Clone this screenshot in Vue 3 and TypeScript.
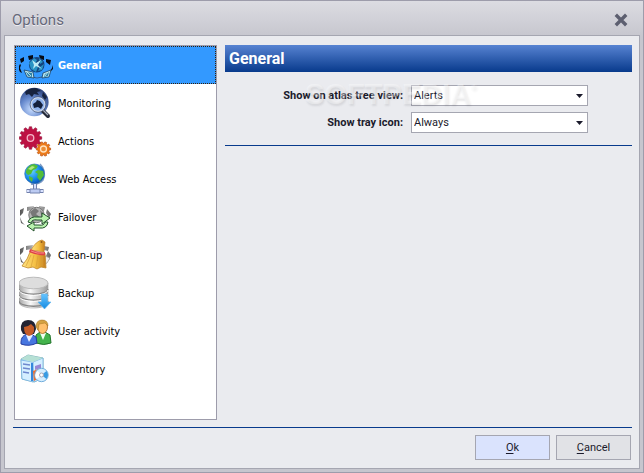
<script setup lang="ts">
import { ref } from 'vue'

const sections = [
  'General', 'Monitoring', 'Actions', 'Web Access', 'Failover',
  'Clean-up', 'Backup', 'User activity', 'Inventory',
] as const
type Section = (typeof sections)[number]

const current = ref<Section>('General')
const atlasView = ref('Alerts')
const trayIcon = ref('Always')

function gear(cx: number, cy: number, outer: number, inner: number, teeth: number): string {
  const points: string[] = []
  const step = (Math.PI * 2) / teeth
  for (let i = 0; i < teeth; i++) {
    for (const [offset, radius] of [[-0.3, inner], [-0.2, outer], [0.2, outer], [0.3, inner]]) {
      const a = (i + offset) * step
      points.push(`${(cx + radius * Math.cos(a)).toFixed(1)},${(cy + radius * Math.sin(a)).toFixed(1)}`)
    }
  }
  return points.join(' ')
}
const redGear = gear(11.5, 15, 11.3, 9.2, 12)
const orangeGear = gear(24.5, 26, 7.2, 5.8, 10)
</script>

<template>
  <div class="window">
    <header class="titlebar">
      <h1>Options</h1>
      <button class="close" type="button" aria-label="Close">
        <svg width="14" height="14" viewBox="0 0 14 14"><path d="M3 3l8 8M11 3l-8 8" stroke="#5d5f70" stroke-width="3.4" stroke-linecap="square" /></svg>
      </button>
    </header>
    <main class="client">
      <div class="panes">
        <nav class="list" aria-label="Sections">
          <button
            v-for="s in sections" :key="s" type="button" class="item"
            :class="{ selected: s === current }" @click="current = s"
          >
            <svg class="icon" viewBox="0 0 36 36" aria-hidden="true">
              <defs v-if="s === 'General'">
                <radialGradient id="ball" cx=".4" cy=".75" r=".8"><stop offset="0" stop-color="#c6dcff" /><stop offset=".5" stop-color="#6487cc" /><stop offset="1" stop-color="#293d75" /></radialGradient>
                <radialGradient id="sea" cx=".35" cy=".35" r=".75"><stop offset="0" stop-color="#69d5ff" /><stop offset=".55" stop-color="#178bea" /><stop offset="1" stop-color="#0647ae" /></radialGradient>
                <linearGradient id="metal"><stop offset="0" stop-color="#a6a6a6" /><stop offset=".4" stop-color="#f8f8f8" /><stop offset="1" stop-color="#999" /></linearGradient>
                <linearGradient id="straw" x2="1"><stop offset="0" stop-color="#ffe484" /><stop offset=".55" stop-color="#f5c043" /><stop offset="1" stop-color="#c47c1b" /></linearGradient>
                <linearGradient id="down" x2="0" y2="1"><stop offset="0" stop-color="#66c4ff" /><stop offset="1" stop-color="#168be2" /></linearGradient>
                <linearGradient id="box"><stop offset="0" stop-color="#80bff0" /><stop offset=".4" stop-color="#eef9ff" /><stop offset="1" stop-color="#68afe9" /></linearGradient>
                <linearGradient id="ring"><stop offset="0" stop-color="#555" /><stop offset=".5" stop-color="#c4c4c4" /><stop offset="1" stop-color="#666" /></linearGradient>
              </defs>
              <g v-if="s === 'General'">
                <path d="M13 30Q18 32 23 30" fill="none" stroke="#315d92" />
                <path d="M1 12l4-2v4l-3 2zM9 9l5-1v4l-4 1zM20 8l5 1v4l-4-1zM27 12l5 1-1 5-4-3zM1 17l1 1-1 3 2 5-2-1-2-4zM34 18v4l-4 4 3-5z" fill="#070b14" />
                <circle cx="17.700" cy="17.700" r="7.800" fill="#14447f" />
                <path d="M10 16l5-5 3 2-2 4 3 3-2 5-5-3zM20 11l4 4-3 2zM21 20l4-3-2 6-4 1z" fill="#2993c4" />
                <path d="M13 13l4 3 5-3-3 5 4 4-6-3-3 3 1-4z" fill="#bdebf5" />
                <path d="M5 23l9 2 1 6-7-1zM24 26l8-3-2 7-7 1z" fill="#bce6ee" stroke="#163f63" stroke-width=".8" />
                <path d="M7 25l6 1v4l-4-1zM26 27l4-2-1 4-4 1z" fill="#2e83aa" />
                <path d="M8 25l4 4M29 25l-3 4" stroke="#d8f5f8" stroke-width=".8" />
              </g>
              <g v-else-if="s === 'Monitoring'">
                <circle cx="15.3" cy="17" r="14.3" fill="url(#ball)" />
                <path d="M6 7Q10 3 17 3l5 3-4 1 2 3-5-1-2 3-3-3-3 1zM24 7l4 5-2 3-3-4z" fill="#18233e" />
                <path d="M22 24l7 7" stroke="#262b39" stroke-width="4" stroke-linecap="round" />
                <path d="M23 24l6 6" stroke="#a5acbc" stroke-width="1.3" />
                <circle cx="19" cy="19.5" r="7" fill="#8db1eb" stroke="#cbd6e9" stroke-width="1.5" />
                <circle cx="19" cy="19.5" r="7.9" fill="none" stroke="#435373" stroke-width=".7" />
                <path d="M14 19l3-2 1-2 3 1 3 4-2 4-3-2-4 1z" fill="#14203c" />
              </g>
              <g v-else-if="s === 'Actions'">
                <polygon :points="redGear" fill="#bd1143" stroke="#930e38" stroke-width=".6" />
                <circle cx="11.5" cy="15" r="3.3" fill="#c92355" stroke="#f4b7c8" stroke-width="1.3" />
                <polygon :points="orangeGear" fill="#ee7b18" stroke="#b95013" stroke-width=".7" />
                <circle cx="24.5" cy="26" r="3" fill="#eb8d36" stroke="#ffe1bd" stroke-width="1.3" />
              </g>
              <g v-else-if="s === 'Web Access'">
                <path d="M21 3Q28 10 24 19Q20 24 12 23" fill="none" stroke="#7c9ac4" stroke-width="1.6" />
                <path d="M16 23v5M7.500 30h17" stroke="#7180ac" stroke-width="4" />
                <path d="M16 23v5M8 30h16" stroke="#d9e2ff" stroke-width="2" />
                <path d="M11 28h10v4H11z" fill="#bccbf2" stroke="#7382ae" />
                <circle cx="15.500" cy="12.800" r="9.800" fill="url(#sea)" stroke="#2268ab" stroke-width=".6" />
                <path d="M7 10Q9 4 15 3l4 2-2 3-3 1-2 4-3 1-2-2zM19 9l5 1 1 4-4 6-3-4 1-3-3-2zM10 15l4 2-1 4-3-3z" fill="#53bd37" />
                <path d="M9 8l4-3 3 1-4 3z" fill="#b4e881" />
              </g>
              <g v-else-if="s === 'Failover'">
                <path d="M1 11l4-2-1 5-3 3zM8 8l7-1-1 4-6 1zM20 7l6 1-1 4-5-1zM28 10l4 5-2 4-3-5zM1 18l2 5 3 3-4-2z" fill="url(#ring)" />
                <circle cx="17.500" cy="16" r="7.700" fill="#b5b5b5" stroke="#777" />
                <path d="M11 13l5-4 4 3-3 3 5 4-6 2-3-4zM21 11l4 4-2 4z" fill="#777" />
                <path d="M9 23Q11 17 19 18h4v-4l8 5-8 6v-4h-5Q13 20 12 24z" fill="#b9f2ae" stroke="#24522c" stroke-width="1" />
                <path d="M29 23Q28 30 20 29h-5v3l-7-5 7-4v3h5Q25 27 26 23z" fill="#b9f2ae" stroke="#24522c" stroke-width="1" />
              </g>
              <g v-else-if="s === 'Clean-up'">
                <path d="M1 12l4-2-1 5-3 3zM7 9l7-1-1 4-6 1zM25 9l5 1-1 4-4-1zM29 14l3 4-2 5-3-4zM1 19l2 5 3 3-4-2z" fill="url(#ring)" />
                <path d="M26 19l5 2-3 5-4 2z" fill="#eee" stroke="#999" stroke-width=".7" />
                <path d="M12 13Q17 4 23 3l3 2-1 10z" fill="url(#straw)" stroke="#bd812d" stroke-width=".7" />
                <circle cx="22.500" cy="5" r="1" fill="#8c571c" />
                <path d="M11 15l15 1 1 15-5-1-4 2-4-2-5 1-6-2 2-3 3-4z" fill="url(#straw)" stroke="#bf882d" stroke-width=".8" />
                <path d="M12 18L7 29M15 18l-3 12M19 19l-2 11M23 19v10" stroke="#d9a03a" stroke-width=".7" fill="none" />
                <path d="M11 12q7 4 15 3v3q-8 1-16-3z" fill="#df4147" />
                <path d="M12 14q6 3 13 2" stroke="#ffaca1" fill="none" stroke-width=".7" />
              </g>
              <g v-else-if="s === 'Backup'">
                <path d="M0 8v19c0 8 29 8 29 0V8z" fill="url(#metal)" stroke="#aaa" stroke-width=".7" />
                <path d="M0 14c1 7 28 7 29 0M0 20c1 7 28 7 29 0M0 26c1 7 28 7 29 0" fill="none" stroke="#858585" stroke-width="1.300" />
                <path d="M0 15c1 7 28 7 29 0M0 21c1 7 28 7 29 0" fill="none" stroke="#fff" />
                <ellipse cx="14.500" cy="8" rx="14.500" ry="5.800" fill="#ddd" stroke="#bbb" />
                <path d="M22.500 19h6v8h3.500l-6.500 7-6.500-7h3.500z" fill="url(#down)" stroke="#62b6ee" stroke-width=".6" />
              </g>
              <g v-else-if="s === 'User activity'">
                <path d="M17 30V22l4-3h5l5 3 1 8q-7 3-15 0z" fill="#43b34c" stroke="#23752c" />
                <path d="M21 20l3 7 3-7z" fill="#effff0" />
                <ellipse cx="23.500" cy="14" rx="5" ry="6.500" fill="#ffc06c" stroke="#a75f1c" stroke-width=".8" />
                <path d="M17 14Q17 7 23 7q6 0 6 6l-3-3-6 1-1 6z" fill="#d4a243" stroke="#a4731f" stroke-width=".5" />
                <path d="M2 29q0-6 6-8h4l5 3 1 6q-8 4-16 1z" fill="#4776df" stroke="#263da1" />
                <path d="M7 22l3 7 4-7z" fill="#e8f0ff" />
                <path d="M2 17Q1 7 9 7q8 0 8 9l-2 5H4z" fill="#222332" />
                <path d="M5 14Q9 14 12 11l3 3q1 8-5 9-5-1-5-9z" fill="#c55c28" />
              </g>
              <g v-else>
                <path d="M2 8l7-4 15 3v20l-9 4L3 28z" fill="url(#box)" stroke="#8cb9be" />
                <path d="M2 9l11 2 1 20-11-3zM14 11l10-4v20l-9 4z" fill="#d5efff" stroke="#6aace0" stroke-width=".7" />
                <path d="M2 8l7-4 15 3-10 4z" fill="#b6e0d4" />
                <path d="M4 13l7 1M4 17l7 1M4 21l6 1" stroke="#6d88ce" stroke-width="1.600" />
                <path d="M13 12v18" stroke="#3587dc" stroke-width="2" />
                <path d="M16 15l6-2v4l-6 2z" fill="#9888d5" />
                <path d="M14 20l8-3v9l-7 4z" fill="#f36c29" />
                <circle cx="22.500" cy="24" r="6.700" fill="#d3edff" stroke="#73aedc" />
                <path d="M22.500 24l5-4q3 4 0 8z" fill="#389be2" /><path d="M22.500 24l-5 4q-3-4 1-8z" fill="#fff" />
                <circle cx="22.500" cy="24" r="2" fill="#fff" stroke="#a9a7b5" />
              </g>
            </svg>
            <span>{{ s }}</span>
          </button>
        </nav>
        <section class="settings">
          <h2>{{ current }}</h2>
          <form class="fields" @submit.prevent>
            <label for="atlas">Show on atlas tree view:</label>
            <div class="combo">
              <select id="atlas" v-model="atlasView"><option>Alerts</option></select>
              <svg width="7" height="4" viewBox="0 0 7 4" aria-hidden="true"><path d="M0 0h7L3.500 4z" fill="#1b1b2c" /></svg>
            </div>
            <label for="tray">Show tray icon:</label>
            <div class="combo">
              <select id="tray" v-model="trayIcon"><option>Always</option></select>
              <svg width="7" height="4" viewBox="0 0 7 4" aria-hidden="true"><path d="M0 0h7L3.500 4z" fill="#1b1b2c" /></svg>
            </div>
            <div class="watermark" aria-hidden="true">SOFTPEDIA<sup>®</sup></div>
          </form>
        </section>
      </div>
      <footer class="actions">
        <button type="button" class="push primary"><u>O</u>k</button>
        <button type="button" class="push"><u>C</u>ancel</button>
      </footer>
    </main>
  </div>
</template>

<style>
body { margin: 0; }
</style>

<style scoped>
* { box-sizing: border-box; }
.window {
  min-height: 100vh;
  display: flex;
  flex-direction: column;
  padding: 0 3px 3px;
  border: 1px solid #9d9cab;
  background: linear-gradient(#dcdce2, #c6c6ce 36px);
  font-family: Roboto, "Liberation Sans", sans-serif;
  font-size: 11px;
  color: #1b1b2c;
}
.titlebar {
  display: flex;
  align-items: center;
  justify-content: space-between;
  height: 34px;
  padding: 4px 9px 0 8px;
}
h1 { margin: 0; font-size: 15px; line-height: 20px; font-weight: 400; color: #666879; text-shadow: 0 1px #ededf2; }
.close { display: grid; place-items: center; width: 20px; height: 20px; padding: 0; border: 0; background: none; }
.client {
  flex: 1;
  display: flex;
  flex-direction: column;
  gap: 7px;
  padding: 9px 7px 8px 8px;
  border: 1px solid #a5a6b1;
  background: #eaebef;
}
.panes { flex: 1; display: flex; gap: 8px; padding-left: 1px; }
.list { flex: 0 0 203px; border: 1px solid #9d9cab; background: #fff; }
.item {
  display: flex;
  align-items: center;
  gap: 3px;
  width: 100%;
  height: 38px;
  padding: 0 3px;
  border: 1px solid transparent;
  background: none;
  font: 11px "DejaVu Sans Condensed", "DejaVu Sans", sans-serif;
  color: #000;
  text-align: left;
}
.item.selected { border: 1px dotted #33200b; background: #3399ff; color: #fff; font-weight: 700; }
.icon { width: 36px; height: 36px; flex: none; }
.settings { flex: 1; min-width: 0; }
h2 {
  margin: 0;
  padding: 0 4px;
  font-size: 16px;
  line-height: 27px;
  font-weight: 700;
  color: #fff;
  background: linear-gradient(#5783d2, #083a8c);
}
.fields {
  position: relative;
  display: grid;
  grid-template-columns: 178px 177px;
  column-gap: 8px;
  row-gap: 6px;
  align-items: center;
  padding: 13px 0 12px;
  border-bottom: 1px solid #083a8c;
}
label { font-weight: 700; text-align: right; }
.combo { display: grid; align-items: center; }
.combo > * { grid-area: 1 / 1; }
.combo svg { justify-self: end; margin-right: 5px; pointer-events: none; }
select {
  appearance: none;
  width: 100%;
  height: 21px;
  padding: 0 2px;
  border: 1px solid #a5a6b1;
  border-radius: 0;
  background: #fff;
  font: inherit;
  color: inherit;
}
.watermark {
  position: absolute;
  left: 80px;
  top: 5px;
  font: 700 29px/34px "Liberation Sans", sans-serif;
  color: rgba(255, 255, 255, 0.35);
  text-shadow: 1px 2px 2px rgba(70, 70, 80, 0.12);
  pointer-events: none;
}
.watermark sup { font-size: 8px; line-height: 8px; vertical-align: 14px; }
.actions {
  display: flex;
  justify-content: flex-end;
  gap: 6px;
  padding: 7px 1px 0 0;
  border-top: 1px solid #083a8c;
}
.push { width: 75px; height: 25px; padding: 0; border: 1px solid #a5a6b1; background: #e1e2e6; font: inherit; color: inherit; }
.push.primary { background: #dae3fd; }
.push u { text-underline-offset: 2px; }
</style>
